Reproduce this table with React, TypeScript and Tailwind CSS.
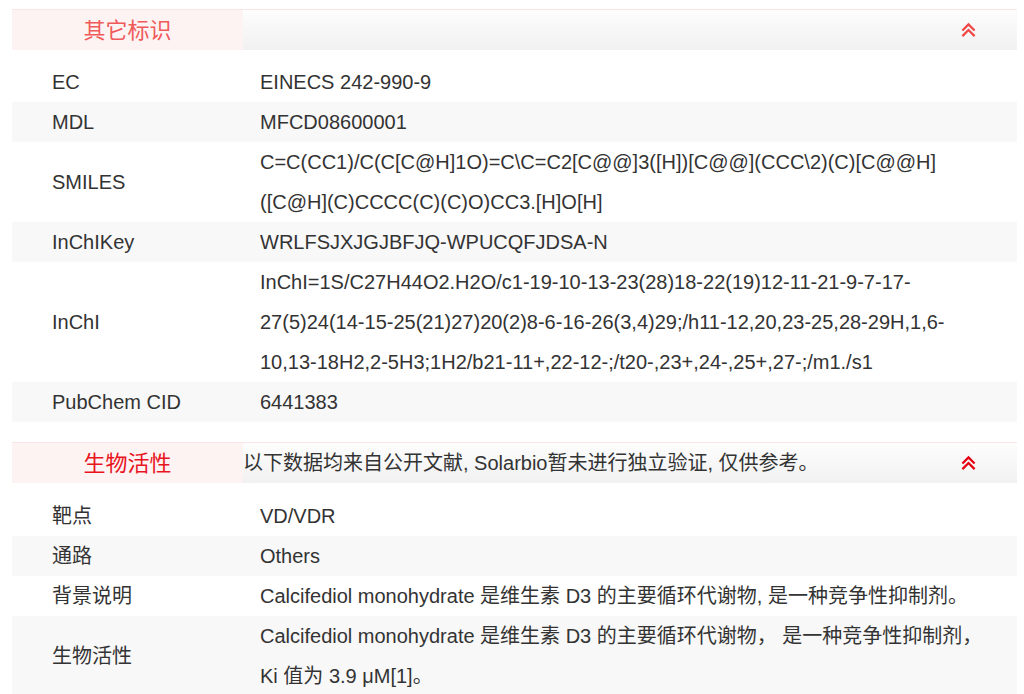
import React from "react";

type Row = { label: string; lines: string[] };

const idRows: Row[] = [
  { label: "EC", lines: ["EINECS 242-990-9"] },
  { label: "MDL", lines: ["MFCD08600001"] },
  {
    label: "SMILES",
    lines: [
      "C=C(CC1)/C(C[C@H]1O)=C\\C=C2[C@@]3([H])[C@@](CCC\\2)(C)[C@@H]",
      "([C@H](C)CCCC(C)(C)O)CC3.[H]O[H]",
    ],
  },
  { label: "InChIKey", lines: ["WRLFSJXJGJBFJQ-WPUCQFJDSA-N"] },
  {
    label: "InChI",
    lines: [
      "InChI=1S/C27H44O2.H2O/c1-19-10-13-23(28)18-22(19)12-11-21-9-7-17-",
      "27(5)24(14-15-25(21)27)20(2)8-6-16-26(3,4)29;/h11-12,20,23-25,28-29H,1,6-",
      "10,13-18H2,2-5H3;1H2/b21-11+,22-12-;/t20-,23+,24-,25+,27-;/m1./s1",
    ],
  },
  { label: "PubChem CID", lines: ["6441383"] },
];

const bioRows: Row[] = [
  { label: "靶点", lines: ["VD/VDR"] },
  { label: "通路", lines: ["Others"] },
  {
    label: "背景说明",
    lines: ["Calcifediol monohydrate 是维生素 D3 的主要循环代谢物, 是一种竞争性抑制剂。"],
  },
  {
    label: "生物活性",
    lines: [
      "Calcifediol monohydrate 是维生素 D3 的主要循环代谢物， 是一种竞争性抑制剂，",
      "Ki 值为 3.9 μM[1]。",
    ],
  },
];

function ChevronsUp({ className }: { className: string }) {
  return (
    <svg viewBox="0 0 16 16" className={className} fill="none" stroke="currentColor" strokeWidth="2.4">
      <polyline points="1.5,8.5 8,2 14.5,8.5" />
      <polyline points="1.5,14.5 8,8 14.5,14.5" />
    </svg>
  );
}

function SectionHeader({
  title,
  note,
  strong,
}: {
  title: string;
  note?: string;
  strong?: boolean;
}) {
  return (
    <div className="flex h-[41px] border-t border-[#f8e6e6]">
      <div
        className={`w-[231px] shrink-0 flex items-center justify-center bg-[#fef3f3] text-[22px] ${
          strong ? "text-[#e8141e]" : "text-[#f05a5a]"
        }`}
      >
        {title}
      </div>
      <div className="flex-1 flex items-center justify-between pr-[41px] bg-gradient-to-b from-[#fdfdfd] to-[#f1f1f1]">
        <span className="text-[20px] text-[#333]">{note}</span>
        <ChevronsUp className={`w-[15px] h-[16px] ${strong ? "text-[#e60012]" : "text-[#f04848]"}`} />
      </div>
    </div>
  );
}

function InfoTable({ rows }: { rows: Row[] }) {
  return (
    <div>
      {rows.map((r, i) => (
        <div
          key={r.label}
          className={`flex items-center text-[20px] leading-[40px] text-[#333] ${
            i % 2 === 1 ? "bg-[#f8f8f8]" : "bg-white"
          }`}
        >
          <div className="w-[248px] shrink-0 pl-[40px]">{r.label}</div>
          <div className="flex-1 whitespace-nowrap">
            {r.lines.map((l, j) => (
              <div key={j}>{l}</div>
            ))}
          </div>
        </div>
      ))}
    </div>
  );
}

export default function App() {
  return (
    <div
      className="w-[1024px] h-[694px] overflow-hidden bg-white pl-[12px] pr-[7px] pt-[9px]"
      style={{ fontFamily: '"Liberation Sans", Arial, "Noto Sans CJK SC", sans-serif' }}
    >
      <SectionHeader title="其它标识" />
      <div className="mt-[12px]">
        <InfoTable rows={idRows} />
      </div>
      <div className="mt-[20px]">
        <SectionHeader
          title="生物活性"
          note="以下数据均来自公开文献, Solarbio暂未进行独立验证, 仅供参考。"
          strong
        />
      </div>
      <div className="mt-[13px]">
        <InfoTable rows={bioRows} />
      </div>
    </div>
  );
}
